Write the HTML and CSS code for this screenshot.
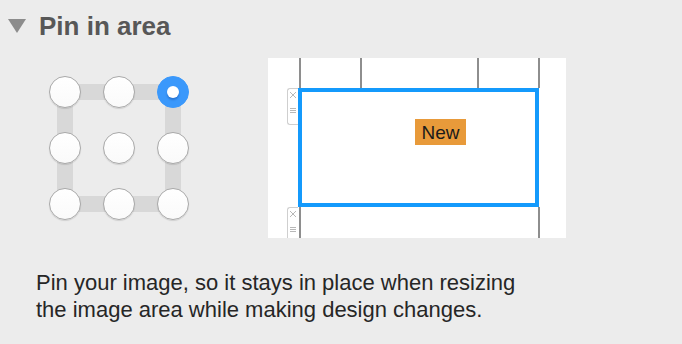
FILE: index.html
```html
<!DOCTYPE html>
<html lang="en">
<head>
  <meta charset="UTF-8">
  <title>Pin in area</title>
  <link rel="stylesheet" href="styles.css">
</head>
<body>
  <div class="section-header">
    <span class="disclosure"></span>
    <h2 class="section-title">Pin in area</h2>
  </div>

  <div class="pin-row">
    <!-- 3x3 anchor picker -->
    <div class="pin-grid">
      <button class="pin-dot"></button>
      <button class="pin-dot"></button>
      <button class="pin-dot selected"></button>
      <button class="pin-dot"></button>
      <button class="pin-dot"></button>
      <button class="pin-dot"></button>
      <button class="pin-dot"></button>
      <button class="pin-dot"></button>
      <button class="pin-dot"></button>
    </div>

    <!-- layout preview -->
    <div class="preview">
      <div class="preview-cols">
        <div class="col narrow"></div>
        <div class="col wide"></div>
        <div class="col narrow"></div>
      </div>
      <div class="preview-block">
        <div class="block-handle">
          <svg width="8" height="8" viewBox="0 0 8 8"><path d="M1 1L7 7M7 1L1 7" stroke="#b8b8b8" stroke-width="1"/></svg>
          <svg width="8" height="7" viewBox="0 0 8 7"><path d="M1 1.5H7M1 3.5H7M1 5.5H7" stroke="#b8b8b8" stroke-width="1"/></svg>
        </div>
        <div class="image-area">
          <span class="new-tag">New</span>
        </div>
      </div>
      <div class="preview-block">
        <div class="block-handle">
          <svg width="8" height="8" viewBox="0 0 8 8"><path d="M1 1L7 7M7 1L1 7" stroke="#b8b8b8" stroke-width="1"/></svg>
          <svg width="8" height="7" viewBox="0 0 8 7"><path d="M1 1.5H7M1 3.5H7M1 5.5H7" stroke="#b8b8b8" stroke-width="1"/></svg>
        </div>
        <div class="bottom-area"></div>
      </div>
    </div>
  </div>

  <p class="description">Pin your image, so it stays in place when resizing<br>the image area while making design changes.</p>
</body>
</html>
```

FILE: styles.css
```css
body {
  font-family: "Liberation Sans", Arial, sans-serif;
  margin: 0;
  padding: 0;
  width: 682px;
  height: 344px;
  overflow: hidden;
  background-color: #ececec;
  color: #262626;
}

.section-header {
  display: flex;
  align-items: center;
  padding: 11px 0 0 8px;
  height: 30px;
}

.disclosure {
  width: 0;
  height: 0;
  border-left: 9px solid transparent;
  border-right: 9px solid transparent;
  border-top: 14px solid #8c8c8c;
  margin-right: 13px;
}

.section-title {
  margin: 0;
  font-size: 26px;
  line-height: 30px;
  font-weight: 700;
  color: #575757;
}

.pin-row {
  display: flex;
  margin-top: 17px;
}

.pin-grid {
  position: relative;
  display: grid;
  grid-template-columns: repeat(3, 32px);
  grid-template-rows: repeat(3, 32px);
  column-gap: 22px;
  row-gap: 24px;
  margin: 18px 0 0 49px;
  align-self: flex-start;
}

.pin-grid::before {
  content: '';
  position: absolute;
  top: 8px;
  left: 8px;
  right: 8px;
  bottom: 8px;
  border: 16px solid #d8d8d8;
}

.pin-dot {
  position: relative;
  width: 32px;
  height: 32px;
  padding: 0;
  border-radius: 50%;
  border: 1px solid #a9a9a9;
  background: linear-gradient(#ffffff, #fafafa);
  box-shadow: 0 1px 1px rgba(0, 0, 0, 0.12);
  cursor: pointer;
}

.pin-dot.selected {
  border-color: #3a98fb;
  background: #3a98fb;
  box-shadow: none;
}

.pin-dot.selected::after {
  content: '';
  position: absolute;
  top: 9px;
  left: 9px;
  width: 12px;
  height: 12px;
  border-radius: 50%;
  background-color: white;
  box-shadow: 0 2px 2px rgba(0, 40, 120, 0.3);
}

.preview {
  width: 298px;
  height: 180px;
  margin-left: 79px;
  background-color: white;
  overflow: hidden;
}

.preview-cols {
  display: flex;
  height: 30px;
  width: 241px;
  margin-left: 31px;
  border-right: 2px solid #8e8e8e;
  box-sizing: border-box;
}

.col {
  border-left: 2px solid #8e8e8e;
  box-sizing: border-box;
}

.col.narrow {
  width: 61px;
}

.col.wide {
  width: 117px;
}

.preview-block {
  display: flex;
  align-items: flex-start;
  margin-left: 19px;
}

.block-handle {
  display: flex;
  flex-direction: column;
  align-items: center;
  gap: 8px;
  width: 11px;
  height: 37px;
  padding-top: 2px;
  border: 1px solid #cfcfcf;
  border-right: none;
  border-radius: 3px 0 0 3px;
  box-sizing: border-box;
  background-color: white;
}

.image-area {
  width: 241px;
  height: 119px;
  border: 4px solid #149afc;
  box-sizing: border-box;
  padding: 27px 0 0 113px;
}

.new-tag {
  display: inline-block;
  width: 51px;
  height: 26px;
  line-height: 27px;
  text-align: center;
  background-color: #e89a3a;
  color: #1a1a1a;
  font-size: 19px;
}

.bottom-area {
  width: 241px;
  height: 31px;
  margin-left: 1px;
  border-left: 2px solid #8e8e8e;
  border-right: 2px solid #8e8e8e;
  box-sizing: border-box;
}

.description {
  margin: 31px 0 0 36px;
  font-size: 22px;
  line-height: 27px;
}
```
